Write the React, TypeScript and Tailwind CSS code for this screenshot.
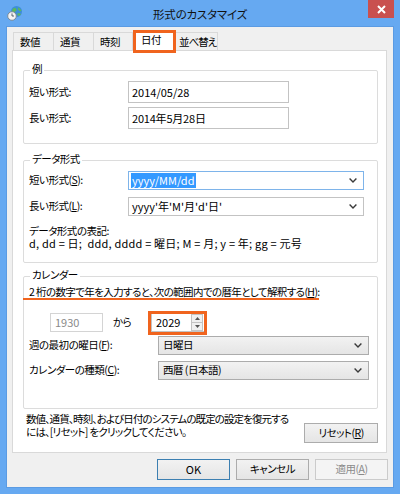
import React from "react";

const Chevron = () => (
  <svg width="8" height="5" viewBox="0 0 8 5" className="shrink-0">
    <path d="M0.6 0.6 L4 4 L7.4 0.6" fill="none" stroke="#3a3a3a" strokeWidth="1.4" />
  </svg>
);

const GlobeIcon = () => (
  <svg width="16" height="16" viewBox="0 0 16 16">
    <circle cx="9.5" cy="6.5" r="5.5" fill="#3d8fd8" />
    <path d="M6 3.5 C7.5 2.5 9 3 9.5 4.5 C10 6 8 6.5 7 7.5 C6.2 8.3 5.2 7 5 5.5 Z" fill="#5cb85c" />
    <path d="M11 2.5 C12.5 3 14 4.5 14.5 6 C13 6.5 11.5 5.5 11 4 Z" fill="#5cb85c" />
    <path d="M10.5 8.5 C12 8 13.5 8.5 13.8 9.5 C12.5 11 11 11 10.5 10 Z" fill="#5cb85c" />
    <circle cx="5" cy="11" r="4.3" fill="#f4f4f4" stroke="#7a8a99" strokeWidth="1" />
    <path d="M5 8.4 V11 H7" fill="none" stroke="#4a5560" strokeWidth="0.9" />
  </svg>
);

const CloseX = () => (
  <svg width="9" height="9" viewBox="0 0 9 9">
    <path d="M1 1 L8 8 M8 1 L1 8" stroke="#ffffff" strokeWidth="2" />
  </svg>
);

const SpinArrow = ({ up }: { up: boolean }) => (
  <svg width="5" height="3" viewBox="0 0 5 3">
    {up ? <path d="M0 3 L2.5 0 L5 3 Z" fill="#555" /> : <path d="M0 0 L2.5 3 L5 0 Z" fill="#555" />}
  </svg>
);

export default function App() {
  return (
    <div className="w-[400px] h-[494px] bg-[#66a9f1] flex flex-col font-['Noto_Sans_CJK_JP',sans-serif] text-[10.5px] tracking-[-0.5px] text-black [font-feature-settings:'palt'] leading-none overflow-hidden whitespace-nowrap">
      {/* Title bar */}
      <div className="h-[26px] shrink-0 grid grid-cols-[1fr_auto_1fr]">
        <div className="pl-[7px] pt-[5px]">
          <GlobeIcon />
        </div>
        <div className="pt-[9px] text-[11.5px] tracking-[-0.2px] text-[#111]">形式のカスタマイズ</div>
        <div className="justify-self-end mr-[6px] w-[26px] h-[18px] bg-[#c9504f] flex items-center justify-center">
          <CloseX />
        </div>
      </div>

      {/* Client area */}
      <div className="mx-[6px] mb-[6px] flex-1 bg-[#f0f0f0] border border-[#5b9be3] flex flex-col">
        {/* Tabs */}
        <div className="h-[23px] shrink-0 flex items-end pl-[6px]">
          <div className="h-[18px] w-[41px] border border-b-0 border-[#d9d9d9] bg-[#f0f0f0] pl-[6px] pt-[4px]">数値</div>
          <div className="h-[18px] w-[40px] border border-b-0 border-l-0 border-[#d9d9d9] bg-[#f0f0f0] pl-[6px] pt-[4px]">通貨</div>
          <div className="h-[18px] w-[39px] border border-b-0 border-l-0 border-[#d9d9d9] bg-[#f0f0f0] pl-[6px] pt-[4px]">時刻</div>
          <div className="relative z-10 h-[21px] w-[43px] -mb-px border border-b-0 border-[#d9d9d9] bg-white pl-[7px] pt-[4px]">
            日付
            <div className="absolute -left-px -right-px -top-px -bottom-[2px] border-[3px] border-[#f0641e]" />
          </div>
          <div className="h-[18px] w-[42px] border border-b-0 border-l-0 border-[#d9d9d9] bg-[#f0f0f0] pl-[3px] pt-[4px] tracking-[-1px]">並べ替え</div>
        </div>

        {/* Tab panel */}
        <div className="ml-[5px] mr-[6px] h-[403px] shrink-0 bg-white border border-[#d9d9d9] flex flex-col">
          {/* 例 */}
          <div className="mt-[19px] ml-[10px] mr-[8px] border border-[#dcdcdc] rounded-[2px] pl-[5px] pb-[14px]">
            <div className="-mt-[9px] ml-[1px] px-[2px] bg-white w-fit h-[14px] leading-[14px]">例</div>
            <div className="mt-[5px] flex items-center">
              <div className="w-[99px]">短い形式:</div>
              <div className="w-[161px] h-[22px] border border-[#c3c3c3] bg-white flex items-center pl-[3px] tracking-normal text-[11px]">2014/05/28</div>
            </div>
            <div className="mt-[4px] flex items-center">
              <div className="w-[99px]">長い形式:</div>
              <div className="w-[161px] h-[22px] border border-[#c3c3c3] bg-white flex items-center pl-[3px] tracking-[-0.2px] text-[11px]">2014年5月28日</div>
            </div>
          </div>

          {/* データ形式 */}
          <div className="mt-[16px] ml-[10px] mr-[8px] border border-[#dcdcdc] rounded-[2px] pl-[5px] pb-[12px]">
            <div className="-mt-[9px] ml-[1px] px-[2px] bg-white w-fit h-[14px] leading-[14px]">データ形式</div>
            <div className="mt-[5px] flex items-center">
              <div className="w-[99px]">
                短い形式(<span className="underline">S</span>):
              </div>
              <div className="w-[236px] h-[19px] border border-[#7eb4ea] bg-white flex items-center pl-[2px] pr-[6px]">
                <span className="bg-[#3399ff] text-white h-[15px] leading-[15px] px-px tracking-normal text-[11px]">yyyy/MM/dd</span>
                <div className="flex-1" />
                <Chevron />
              </div>
            </div>
            <div className="mt-[7px] flex items-center">
              <div className="w-[99px]">
                長い形式(<span className="underline">L</span>):
              </div>
              <div className="w-[236px] h-[19px] border border-[#c3c3c3] bg-white flex items-center pl-[3px] pr-[6px]">
                <span className="tracking-normal text-[11px]">yyyy'年'M'月'd'日'</span>
                <div className="flex-1" />
                <Chevron />
              </div>
            </div>
            <div className="mt-[8px] leading-[13px]">
              <div>データ形式の表記:</div>
              <div className="text-[11px] tracking-[0.2px]">d, dd = 日;&nbsp; ddd, dddd = 曜日; M = 月; y = 年; gg = 元号</div>
            </div>
          </div>

          {/* カレンダー */}
          <div className="mt-[13px] ml-[10px] mr-[8px] border border-[#dcdcdc] rounded-[2px] pl-[5px] pb-[28px]">
            <div className="-mt-[9px] ml-[1px] px-[2px] bg-white w-fit h-[14px] leading-[14px]">カレンダー</div>
            <div className="relative mt-[3px] h-[14px] leading-[14px] tracking-[-0.6px]">
              2 桁の数字で年を入力すると、次の範囲内での暦年として解釈する(<span className="underline">H</span>):
              <div className="absolute -left-[6px] w-[296px] top-[13px] h-[2px] bg-[#f0641e]" />
            </div>
            <div className="mt-[14px] flex items-center">
              <div className="ml-[21px] w-[53px] h-[19px] border border-[#d4d4d4] bg-white flex items-center pl-[4px] text-[#8a8a8a] tracking-normal text-[11px]">1930</div>
              <div className="ml-[10px] w-[38px]">から</div>
              <div className="relative w-[54px] h-[19px] border border-[#c3c3c3] bg-white flex items-center pl-[4px]">
                <span className="flex-1 tracking-normal text-[11px]">2029</span>
                <div className="w-[12px] h-full flex flex-col mr-px">
                  <div className="flex-1 border border-[#c3c3c3] bg-[#f0f0f0] flex items-center justify-center">
                    <SpinArrow up />
                  </div>
                  <div className="flex-1 border border-t-0 border-[#c3c3c3] bg-[#f0f0f0] flex items-center justify-center">
                    <SpinArrow up={false} />
                  </div>
                </div>
                <div className="absolute -left-[4px] -right-[3px] -top-[3px] -bottom-[4px] border-[3px] border-[#f0641e]" />
              </div>
            </div>
            <div className="mt-[4px] flex items-center">
              <div className="w-[129px]">
                週の最初の曜日(<span className="underline">F</span>):
              </div>
              <div className="w-[211px] h-[19px] border border-[#acacac] bg-linear-to-b from-[#f2f2f2] to-[#e5e5e5] flex items-center pl-[4px] pr-[6px]">
                <span className="flex-1">日曜日</span>
                <Chevron />
              </div>
            </div>
            <div className="mt-[6px] flex items-center">
              <div className="w-[129px]">
                カレンダーの種類(<span className="underline">C</span>):
              </div>
              <div className="w-[211px] h-[19px] border border-[#acacac] bg-linear-to-b from-[#f2f2f2] to-[#e5e5e5] flex items-center pl-[4px] pr-[6px]">
                <span className="flex-1">西暦 (日本語)</span>
                <Chevron />
              </div>
            </div>
          </div>

          {/* Reset */}
          <div className="mt-[3px] ml-[13px] mr-[8px] flex items-start">
            <div className="leading-[13px] w-[280px]">
              <div className="tracking-[-0.9px]">数値、通貨、時刻、および日付のシステムの既定の設定を復元する</div>
              <div className="tracking-[-0.7px]">には、[リセット] をクリックしてください。</div>
            </div>
            <div className="ml-auto mt-[11px] w-[74px] h-[20px] border border-[#acacac] bg-linear-to-b from-[#f2f2f2] to-[#e5e5e5] flex items-center justify-center">
              リセット(<span className="underline">R</span>)
            </div>
          </div>
        </div>

        {/* Buttons */}
        <div className="mt-[6px] pr-[5px] flex justify-end gap-[6px]">
          <div className="w-[73px] h-[21px] border border-[#3c7fb1] bg-linear-to-b from-[#f2f2f2] to-[#e5e5e5] flex items-center justify-center tracking-normal text-[11px]">OK</div>
          <div className="w-[73px] h-[21px] border border-[#acacac] bg-linear-to-b from-[#f2f2f2] to-[#e5e5e5] flex items-center justify-center">キャンセル</div>
          <div className="w-[73px] h-[21px] border border-[#cbcbcb] bg-[#f4f4f4] text-[#8a8a8a] flex items-center justify-center">
            適用(<span className="underline">A</span>)
          </div>
        </div>
      </div>
    </div>
  );
}
